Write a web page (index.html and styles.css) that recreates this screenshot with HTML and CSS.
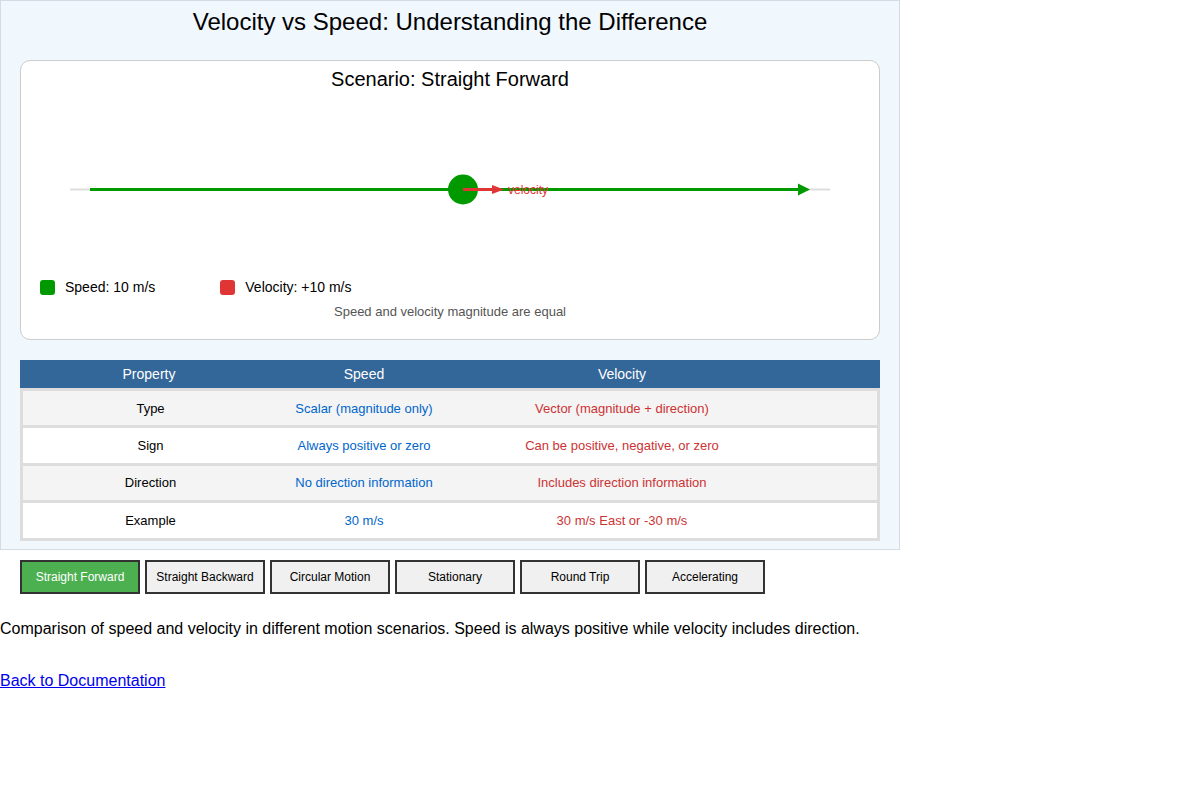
FILE: index.html
```html
<!DOCTYPE html>
<html>
<head>
<meta charset="utf-8">
<title>Velocity vs Speed</title>
<link rel="stylesheet" href="styles.css">
</head>
<body>
<div class="container">
  <h1 class="title">Velocity vs Speed: Understanding the Difference</h1>
  <div class="card">
    <h2 class="card-title">Scenario: Straight Forward</h2>
    <svg class="scene" width="858" height="180" viewBox="21 94 858 180" xmlns="http://www.w3.org/2000/svg">
      <line x1="70" y1="189.5" x2="830" y2="189.5" stroke="#dddddd" stroke-width="2"/>
      <line x1="90" y1="189.5" x2="800" y2="189.5" stroke="#009900" stroke-width="3"/>
      <polygon points="798,183.5 810,189.5 798,195.5" fill="#009900"/>
      <circle cx="463" cy="189.5" r="15" fill="#009900"/>
      <line x1="463" y1="189.5" x2="494" y2="189.5" stroke="#e03535" stroke-width="3"/>
      <polygon points="492,185 504,189.5 492,194" fill="#e03535"/>
      <text x="508" y="194" class="vel-label">velocity</text>
    </svg>
    <div class="legend">
      <div class="legend-item"><span class="swatch swatch-green"></span><span>Speed: 10 m/s</span></div>
      <div class="legend-item"><span class="swatch swatch-red"></span><span>Velocity: +10 m/s</span></div>
    </div>
    <div class="note">Speed and velocity magnitude are equal</div>
  </div>
  <div class="table">
    <div class="row head">
      <div class="cell">Property</div>
      <div class="cell">Speed</div>
      <div class="cell">Velocity</div>
    </div>
    <div class="row body odd first">
      <div class="cell">Type</div>
      <div class="cell speed">Scalar (magnitude only)</div>
      <div class="cell velocity">Vector (magnitude + direction)</div>
    </div>
    <div class="row body">
      <div class="cell">Sign</div>
      <div class="cell speed">Always positive or zero</div>
      <div class="cell velocity">Can be positive, negative, or zero</div>
    </div>
    <div class="row body odd">
      <div class="cell">Direction</div>
      <div class="cell speed">No direction information</div>
      <div class="cell velocity">Includes direction information</div>
    </div>
    <div class="row body">
      <div class="cell">Example</div>
      <div class="cell speed">30 m/s</div>
      <div class="cell velocity">30 m/s East or -30 m/s</div>
    </div>
  </div>
</div>
<div class="buttons">
  <button class="btn active">Straight Forward</button>
  <button class="btn">Straight Backward</button>
  <button class="btn">Circular Motion</button>
  <button class="btn">Stationary</button>
  <button class="btn">Round Trip</button>
  <button class="btn">Accelerating</button>
</div>
<p class="caption">Comparison of speed and velocity in different motion scenarios. Speed is always positive while velocity includes direction.</p>
<p class="back"><a href="#">Back to Documentation</a></p>
</body>
</html>
```
FILE: styles.css
```css
* { box-sizing: border-box; }
body {
  margin: 0;
  font-family: "Liberation Sans", Arial, sans-serif;
  color: #000;
  background: #fff;
}
.container {
  width: 900px;
  background: #f0f7fd;
  border: 1px solid #d3dbe3;
  padding: 7px 19px 8px 19px;
}
.title {
  margin: 0;
  font-size: 24px;
  font-weight: normal;
  line-height: 28px;
  text-align: center;
}
.card {
  margin-top: 24px;
  background: #fff;
  border: 1px solid #cccccc;
  border-radius: 10px;
  padding: 7px 0 20px 0;
}
.card-title {
  margin: 0;
  font-size: 20px;
  font-weight: normal;
  line-height: 23px;
  text-align: center;
}
.scene {
  display: block;
  margin-top: 3px;
}
.vel-label {
  font-family: "Liberation Sans", Arial, sans-serif;
  font-size: 12px;
  fill: #e03535;
}
.legend {
  display: flex;
  gap: 65px;
  padding-left: 19px;
  margin-top: 4px;
  font-size: 14px;
  line-height: 18px;
}
.legend-item {
  display: flex;
  align-items: center;
  gap: 10px;
}
.swatch {
  display: inline-block;
  width: 15px;
  height: 15px;
  border-radius: 3px;
}
.swatch-green { background: #009900; }
.swatch-red { background: #e03535; }
.note {
  margin-top: 8px;
  text-align: center;
  font-size: 13px;
  line-height: 15px;
  color: #555555;
}
.table {
  margin-top: 20px;
  width: 860px;
}
.row {
  display: grid;
  grid-template-columns: 258px 172px 344px;
  text-align: center;
}
.head {
  background: #336699;
  color: #fff;
  font-size: 14px;
  line-height: 16px;
}
.head .cell { padding: 6px 0; }
.body {
  border: 3px solid #dddddd;
  border-top: none;
  font-size: 13px;
  line-height: 15px;
  background: #fff;
  grid-template-columns: 255px 172px 344px;
}
.body.first { border-top: 3px solid #dddddd; }
.body.odd { background: #f4f4f4; }
.body .cell { padding: 9.7px 0; }
.speed { color: #0066cc; }
.velocity { color: #cc3333; }
.buttons {
  display: flex;
  gap: 5px;
  padding-left: 20px;
  margin-top: 10px;
}
.btn {
  width: 120px;
  height: 34px;
  border: 2px solid #333333;
  background: #f0f0f0;
  color: #000;
  font-family: "Liberation Sans", Arial, sans-serif;
  font-size: 12px;
  padding: 0;
  cursor: pointer;
}
.btn.active {
  background: #4caf50;
  color: #fff;
}
.caption {
  margin: 26px 0 0 0;
  font-size: 16px;
  line-height: 18px;
}
.back {
  margin: 34px 0 0 0;
  font-size: 16px;
  line-height: 18px;
}
.back a { color: #0000ee; }
```
